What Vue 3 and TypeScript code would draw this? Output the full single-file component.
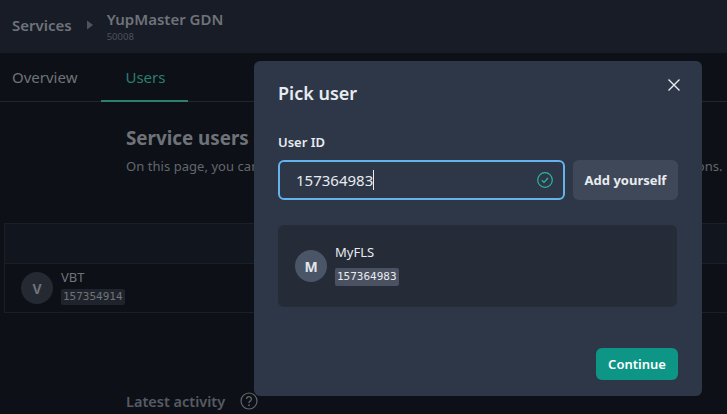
<script setup lang="ts">
const tabs = [
  { label: 'Overview', active: false },
  { label: 'Users', active: true },
]
</script>

<template>
  <div class="page">
    <header class="topbar">
      <span class="crumb">Services</span>
      <svg class="caret" width="8" height="10" viewBox="0 0 8 10"><path d="M1 0.5 L7 5 L1 9.5 Z" fill="currentColor" /></svg>
      <div class="service">
        <span class="service-name">YupMaster GDN</span>
        <span class="service-id">50008</span>
      </div>
    </header>
    <nav class="tabs">
      <a v-for="t in tabs" :key="t.label" class="tab" :class="{ active: t.active }">{{ t.label }}</a>
    </nav>
    <section class="intro">
      <h2 class="intro-title">Service users</h2>
      <p class="intro-text">On this page, you can manage who has access to this service and change all of their permissions.</p>
    </section>
    <section class="table">
      <div class="table-head"></div>
      <div class="table-row">
        <span class="avatar dim">V</span>
        <div class="who dim-who">
          <span class="who-name">VBT</span>
          <code class="who-id dim-id">157354914</code>
        </div>
      </div>
    </section>
    <section class="activity">
      <span class="activity-title">Latest activity</span>
      <svg class="help" width="18" height="18" viewBox="0 0 18 18" fill="none">
        <circle cx="9" cy="9" r="8" stroke="currentColor" stroke-width="1.2" />
        <path d="M6.6 7a2.4 2.4 0 1 1 3.6 2.1c-.8.5-1.2.9-1.2 1.9" stroke="currentColor" stroke-width="1.3" />
        <circle cx="9" cy="13.2" r=".9" fill="currentColor" />
      </svg>
    </section>

    <div class="modal">
      <div class="modal-head">
        <h3 class="modal-title">Pick user</h3>
        <svg class="close" width="12" height="12" viewBox="0 0 12 12"><path d="M.5.5l11 11M11.500.5l-11 11" stroke="currentColor" stroke-width="1.4" /></svg>
      </div>
      <label class="field-label">User ID</label>
      <div class="field-row">
        <div class="input">
          <span class="input-text">157364983</span><span class="cursor"></span>
          <svg class="ok" width="16" height="16" viewBox="0 0 16 16" fill="none">
            <circle cx="8" cy="8" r="7.300" stroke="#2cb5a0" stroke-width="1.200" />
            <path d="M4.800 8.200l2.200 2.200 4-4.400" stroke="#2cb5a0" stroke-width="1.300" />
          </svg>
        </div>
        <button class="add">Add yourself</button>
      </div>
      <div class="result">
        <span class="avatar">M</span>
        <div class="who found">
          <span class="who-name bright">MyFLS</span>
          <code class="who-id">157364983</code>
        </div>
      </div>
      <div class="footer">
        <button class="continue">Continue</button>
      </div>
    </div>
  </div>
</template>

<style>
html, body { margin: 0; background: #0d1017; overflow: hidden; }
</style>

<style scoped>
.page {
  position: relative;
  width: 727px;
  height: 414px;
  overflow: hidden;
  background: #0d1017;
  font-family: "Noto Sans", "Open Sans", sans-serif;
  color: #73767b;
}
.topbar {
  height: 53px;
  box-sizing: border-box;
  background: #171c27;
  display: flex;
  align-items: center;
  padding: 0 0 4px 12px;
}
.crumb { font-size: 15px; font-weight: 600; color: #6f7379; }
.caret { color: #4f545c; margin: 0 13px 0 14px; }
.service { display: flex; flex-direction: column; margin-top: 3px; }
.service-name { font-size: 15px; font-weight: 600; color: #6f7379; line-height: 20px; }
.service-id { font-size: 9.500px; color: #4c525b; line-height: 12px; margin-top: 2px; }
.tabs {
  display: flex;
  height: 48px;
  border-bottom: 1px solid #24262b;
}
.tab {
  box-sizing: border-box;
  height: 49px;
  padding: 14px 12px 0;
  font-size: 15px;
  color: #6f7379;
}
.tab.active {
  margin-left: 12px;
  padding: 14px 23px 0 24px;
  color: #2c7f6d;
  border-bottom: 2px solid #2c7f6d;
}
.intro { padding: 24px 0 0 126px; white-space: nowrap; }
.intro-title { margin: 0; font-size: 18.800px; font-weight: 700; line-height: 24px; color: #6f7379; }
.intro-text { margin: 7px 0 0; font-size: 13px; line-height: 18px; letter-spacing: 0.050px; color: #63676d; }
.table {
  margin: 48px 0 0 4px;
  border: 1px solid #1b1f29;
  border-right: none;
}
.table-head { height: 39px; background: #11151d; border-bottom: 1px solid #1b1f29; }
.table-row { height: 48px; display: flex; align-items: center; padding-left: 16px; gap: 8px; }
.avatar {
  width: 32px;
  height: 32px;
  flex: none;
  border-radius: 50%;
  background: #4a5568;
  color: #e2e6ec;
  font-size: 14px;
  font-weight: 700;
  display: flex;
  align-items: center;
  justify-content: center;
}
.avatar.dim { background: #252932; color: #6f7379; }
.who { display: flex; flex-direction: column; align-items: flex-start; }
.who.found { gap: 7px; margin-top: -3px; }
.who.dim-who { gap: 3px; margin-top: -3px; }
.who-name { font-size: 13px; line-height: 18px; color: #6f7379; }
.who-name.bright { color: #e8ebef; }
.who-id {
  font-family: "DejaVu Sans Mono", monospace;
  font-size: 11px;
  line-height: 18px;
  padding: 0 2px;
  border-radius: 2px;
  background: #4a5160;
  color: #e8ebef;
}
.who-id.dim-id { background: #1f232b; color: #6f7379; line-height: 16px; }
.activity {
  display: flex;
  align-items: center;
  gap: 15px;
  margin: 78px 0 0 126px;
}
.activity-title { font-size: 14.500px; font-weight: 600; color: #565b63; }
.help { color: #63676d; }
.modal {
  position: absolute;
  left: 254px;
  top: 61px;
  width: 448px;
  height: 335px;
  box-sizing: border-box;
  padding: 18px 24px 0;
  border-radius: 6px;
  background: #2d3748;
  color: #e8ebef;
  display: flex;
  flex-direction: column;
}
.modal-head { display: flex; justify-content: space-between; align-items: flex-start; height: 28px; }
.modal-title { margin: 0; font-size: 18px; font-weight: 600; line-height: 28px; color: #e8ebef; }
.close { color: #e8ebef; margin: 0 -2px 0 0; }
.field-label { margin-top: 26px; font-size: 13px; font-weight: 600; line-height: 18px; }
.field-row { display: flex; gap: 8px; margin-top: 9px; }
.input {
  box-sizing: border-box;
  flex: 1;
  height: 40px;
  border: 2px solid #63b3ed;
  border-radius: 6px;
  display: flex;
  align-items: center;
  padding: 0 10px 0 16px;
}
.input-text { font-size: 15px; line-height: 20px; color: #e8ebef; }
.cursor { width: 1px; height: 20px; background: #e8ebef; }
.ok { margin-left: auto; }
.add {
  width: 105px;
  height: 40px;
  border: none;
  border-radius: 6px;
  background: #3f4858;
  color: #e8ebef;
  font-family: inherit;
  font-size: 13px;
  font-weight: 700;
  padding: 0;
}
.result {
  margin-top: 25px;
  height: 82px;
  box-sizing: border-box;
  width: 399px;
  border-radius: 6px;
  background: #252c38;
  display: flex;
  align-items: center;
  gap: 8px;
  padding: 0 17px;
}
.footer { display: flex; justify-content: flex-end; margin-top: 41px; }
.continue {
  width: 82px;
  height: 32px;
  border: none;
  border-radius: 6px;
  background: #0d9686;
  color: #fff;
  font-family: inherit;
  font-size: 13px;
  font-weight: 600;
  padding: 0;
}
</style>
